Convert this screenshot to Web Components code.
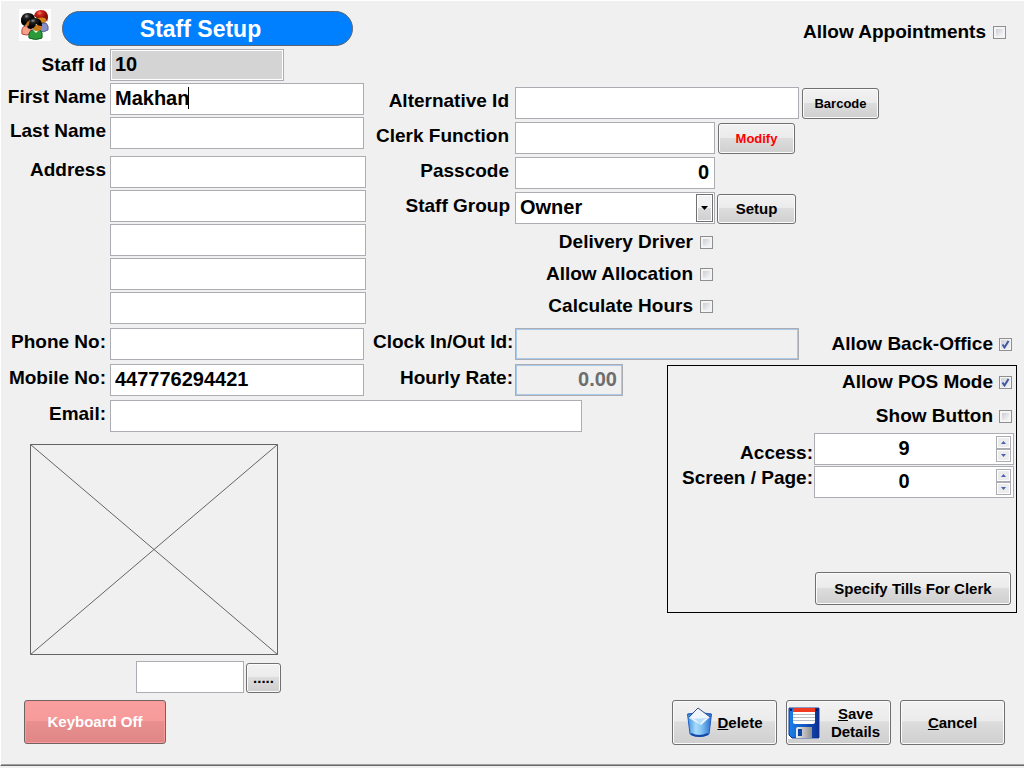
<!DOCTYPE html>
<html lang="en">
<head>
<meta charset="utf-8">
<title>Staff Setup</title>
<style>
html,body{margin:0;background:#f0f0f0}
body{font-family:"Liberation Sans",Arial,sans-serif;font-weight:bold;color:#000}
</style>
</head>
<body>
<staff-setup></staff-setup>
<script>
const attach=(el,html)=>{const r=el.attachShadow({mode:'open'});r.innerHTML=html;return r};

/* label + text box, with room for a trailing button */
class FieldRow extends HTMLElement{
  connectedCallback(){
    const kind=this.getAttribute('kind')||'';
    const label=this.getAttribute('label')||'';
    const pad=label.endsWith(':')?'tight':'';
    const r=attach(this,`<style>
:host{display:flex;align-items:center;min-width:0}
label{flex:none;box-sizing:border-box;width:var(--label-w,110px);padding:0 var(--label-pad,4px) var(--label-lift,4px) 0;text-align:right;font-size:19px;line-height:24px;white-space:nowrap}
label.tight{padding-right:var(--colon-pad,4px)}
.box{position:relative;flex:0 1 var(--field-w,100%);min-width:0;display:flex}
input{box-sizing:border-box;width:100%;height:32px;margin:0;padding:0 5px 2px 4px;border:1px solid #abadb3;border-radius:0;background:#fff;font:inherit;font-size:20px;color:#000;outline:0}
input.id{background:#d4d4d4;box-shadow:inset 0 0 0 1px #fff}
input.off{background:#f0f0f0;color:#6d6d6d;box-shadow:inset 0 0 0 1px #a9c9ea}
input.right{text-align:right}
.caret{position:absolute;left:78px;top:4px;width:1px;height:22px;background:#000}
::slotted(*){flex:none;align-self:flex-end;margin-left:3px}
</style>
<label for="f" class="${pad}">${label}</label>
<span class="box"><input id="f" type="text"></span><slot></slot>`);
    const i=r.querySelector('input');
    i.value=this.getAttribute('value')||'';
    if(kind)i.className=kind;
    if(this.hasAttribute('right'))i.classList.add('right');
    if(kind==='id')i.readOnly=true;
    if(kind==='off')i.disabled=true;
    if(!label){i.setAttribute('aria-label',this.getAttribute('name'));r.querySelector('label').remove();
      if(!this.hasAttribute('flush'))r.querySelector('.box').style.marginLeft='var(--label-w,110px)';}
    if(this.hasAttribute('caret'))r.querySelector('.box').insertAdjacentHTML('beforeend','<span class="caret"></span>');
  }
}
customElements.define('field-row',FieldRow);

class SelectRow extends HTMLElement{
  connectedCallback(){
    attach(this,`<style>
:host{display:flex;align-items:center}
label{flex:none;box-sizing:border-box;width:142px;padding:0 5px 4px 0;text-align:right;font-size:19px;line-height:24px}
.box{position:relative;flex:0 1 200px;display:flex}
select{appearance:none;box-sizing:border-box;width:100%;height:32px;padding:0 20px 2px 4px;border:1px solid #abadb3;border-radius:0;background:#fff;font:inherit;font-size:20px;color:#000}
.arrow{position:absolute;right:2px;top:2px;bottom:2px;width:17px;box-sizing:border-box;border:1px solid #707070;box-shadow:inset 0 0 0 1px #fff;background:linear-gradient(#f2f2f2 50%,#dcdcdc 50%,#cfcfcf);display:grid;place-items:center;pointer-events:none}
::slotted(*){flex:none;align-self:flex-end;margin-left:2px}
</style><label for="s">${this.getAttribute('label')}</label>
<span class="box"><select id="s"><option>${this.getAttribute('value')}</option></select>
<span class="arrow"><svg width="7" height="4"><path d="M0 0h7L3.5 4z"/></svg></span></span><slot></slot>`);
  }
}
customElements.define('select-row',SelectRow);

class CheckRow extends HTMLElement{
  connectedCallback(){
    const r=attach(this,`<style>
:host{display:flex;justify-content:flex-end;align-items:center;height:32px}
label{display:flex;align-items:center;gap:var(--gap,7px);font-size:19px;line-height:24px;white-space:nowrap}
input{appearance:none;flex:none;box-sizing:border-box;width:13px;height:13px;margin:0;border:1px solid #8e8f8f;
background:linear-gradient(135deg,#cbcfd5,#f6f6f6) 2px 2px/7px 7px no-repeat,#f4f4f4;box-shadow:inset 0 0 0 1px #f4f4f4}
input:checked{background:url("data:image/svg+xml,%3Csvg xmlns='http://www.w3.org/2000/svg' width='11' height='11'%3E%3Cpath d='M2.5 5.5L4.5 8.5L8.5 2' fill='none' stroke='%233f55a0' stroke-width='2'/%3E%3C/svg%3E"),linear-gradient(135deg,#cbcfd5,#f6f6f6)}
</style><label><span>${this.getAttribute('label')}</span><input type="checkbox"></label>`);
    r.querySelector('input').checked=this.hasAttribute('checked');
  }
}
customElements.define('check-row',CheckRow);

class PushButton extends HTMLElement{
  connectedCallback(){
    attach(this,`<style>
:host{display:block;width:var(--w,77px);height:var(--h,31px)}
button{box-sizing:border-box;width:100%;height:100%;margin:0;padding:0 3px;border:1px solid #707070;border-radius:3px;box-shadow:inset 0 0 0 1px #fbfbfb;
background:linear-gradient(#f2f2f2,#ebebeb 47%,#dddddd 48%,#cfcfcf);color:var(--ink,#000);font:inherit;font-size:var(--size,15px);line-height:18px;display:flex;align-items:center;justify-content:center;gap:4px}
:host([tone=red]) button{border-color:#6e6464;box-shadow:inset 0 0 0 1px #f99;background:linear-gradient(#f99f9f,#f69a9a 47%,#e98f90 48%,#df8686);color:#fff}
</style><button type="button"><slot></slot></button>`);
  }
}
customElements.define('push-button',PushButton);

class SpinPair extends HTMLElement{
  connectedCallback(){
    const spin=(id,v)=>`<span class="box"><input id="${id}" type="number" value="${v}"><span class="arrows">
<button type="button" aria-label="Increase"><svg width="5" height="3"><path d="M0 3h5L2.5 0z" fill="#4a62b0"/></svg></button>
<button type="button" aria-label="Decrease"><svg width="5" height="3"><path d="M0 0h5L2.5 3z" fill="#4a62b0"/></svg></button></span></span>`;
    attach(this,`<style>
:host{display:flex;justify-content:flex-end;align-items:center}
.labels{display:flex;flex-direction:column;text-align:right;font-size:19px;line-height:25px;padding:0 1px 2px 0;white-space:nowrap}
.boxes{display:flex;flex-direction:column;gap:1px;flex:0 1 200px}
.box{position:relative;display:flex}
input{appearance:textfield;box-sizing:border-box;width:100%;height:32px;margin:0;border:1px solid #abadb3;background:#fff;padding:0 20px 2px 0;text-align:center;font:inherit;font-size:20px;color:#000}
input::-webkit-inner-spin-button{appearance:none;margin:0}
.arrows{position:absolute;right:3px;top:3px;bottom:3px;width:15px;display:flex;flex-direction:column}
button{flex:1;min-height:0;padding:0;border:1px solid #abadb3;box-shadow:inset 0 0 0 1px #fff;background:#ececec;display:grid;place-items:center}
</style><span class="labels"><label for="a">Access:</label><label for="p">Screen / Page:</label></span>
<span class="boxes">${spin('a',9)}${spin('p',0)}</span>`);
  }
}
customElements.define('spin-pair',SpinPair);

class TitleBar extends HTMLElement{
  connectedCallback(){
    attach(this,`<style>
:host{display:flex;align-items:center;height:48px;padding:0 18px}
svg{flex:none;background:#fff}
h1{box-sizing:border-box;width:291px;height:35px;margin:7px 0 0 11px;padding-right:14px;border:1px solid #5a6470;border-radius:18px;background:#0080ff;color:#fff;font-size:23px;line-height:34px;text-align:center}
.end{margin-left:auto;padding-top:14px}
</style>
<svg width="32" height="32" viewBox="0 0 32 32">
<defs><radialGradient id="k" cx=".4" cy=".25"><stop offset="0" stop-color="#999"/><stop offset=".35" stop-color="#222"/><stop offset="1" stop-color="#000"/></radialGradient>
<radialGradient id="r" cx=".4" cy=".25"><stop offset="0" stop-color="#f08070"/><stop offset=".4" stop-color="#cf2418"/><stop offset="1" stop-color="#841008"/></radialGradient></defs>
<path d="M20 22q0-8 4-8h3q3 3 2 7-4 3-9 1z" fill="#8590c8" stroke="#444e80" stroke-width=".8"/>
<path d="M17 7h11q0 7-5 7t-6-7z" fill="#d78318" stroke="#6b3c08" stroke-width=".6"/>
<path d="M15 7Q16 1 22 1q7 0 7 8l-1 4q-1-3-2-4-3-1-8 0z" fill="url(#r)"/>
<path d="M3 25q-1-7 3-8h6v8q-5 2-9 0z" fill="#f5a18a" stroke="#b03a28" stroke-width=".9"/>
<path d="M6 12h10v5q-6 3-9-1z" fill="#b86a18"/>
<path d="M2 12Q2 4 9 4t7 7q-6 0-8 2l-2 4q-4-1-4-5z" fill="url(#k)"/>
<path d="M10 29q-1-6 3-8h8q3 2 2 8-6 3-13 0z" fill="#2a9b38" stroke="#126020"/><path d="M14 21l3 3 3-3z" fill="#ecffec"/>
<path d="M13 16h10q0 6-5 6t-5-6z" fill="#c87818"/>
<path d="M8 18l2-2q0-7 6-7 7 0 7 8-4 0-6-2-1 4-5 5-3 0-4-2z" fill="url(#k)"/></svg>
<h1>Staff Setup</h1><check-row class="end" label="Allow Appointments"></check-row>`);
  }
}
customElements.define('title-bar',TitleBar);

class StaffSetup extends HTMLElement{
  connectedCallback(){
    attach(this,`<style>
:host{display:flex;flex-direction:column;box-sizing:border-box;min-height:100vh;padding-bottom:2px}
main{flex:1;box-sizing:border-box;border-left:1px solid #fff;border-top:1px solid #fff;border-bottom:1px solid #696969;box-shadow:inset 0 -1px #a0a0a0}
.top,.clock{display:grid;grid-template-columns:372fr 651fr}
.clock{margin:4px 0}
.low{display:grid;grid-template-columns:666fr 357fr}
.pair{display:grid;grid-template-columns:372fr 294fr}
.left,.email,.pair,.clock{--label-w:109px;--label-pad:4px;--colon-pad:4px}
.left{display:flex;flex-direction:column;padding-right:7px}
.names{display:grid;gap:2px;padding-right:2px}
.names .id{--field-w:174px;--label-lift:0px}
.address{display:grid;gap:2px;margin-top:7px}
.short{padding-right:9px}
.mid{--label-w:142px;--label-pad:6px;--colon-pad:2px}
.top .mid{display:flex;flex-direction:column;gap:3px;padding-top:38px}
.w284{--field-w:284px}.w200{--field-w:200px}.w108{--field-w:108px}
.small{--size:13px}.modify{--ink:#f00}
.checks{width:340px;margin-top:-1px}
.office{display:flex;justify-content:space-between;padding-right:12px}
.office field-row{flex:1}
.office check-row,.panel check-row{--gap:6px}
.email{--field-w:472px;margin-top:4px}
.photo{display:block;width:248px;height:211px;margin:12px 0 6px 29px}
.file{display:flex;align-items:flex-end;gap:2px;padding-left:135px}
.file push-button{--w:35px;--h:30px}
.file field-row{width:108px}
.panel{box-sizing:border-box;display:flex;flex-direction:column;border:1px solid #000;margin:1px 7px 0 0;height:248px;padding:0 2px 7px}
.panel check-row{padding-right:2px}
.panel .show{margin:2px 0 1px}
.tills{--w:196px;--h:33px;margin:auto 3px 0 auto}
footer{display:flex;align-items:flex-end;gap:9px;padding:7px 19px 18px 23px}
footer push-button{--w:105px;--h:45px}
footer .kb{--w:142px;--h:44px;margin-right:auto;align-self:flex-start}
.center{text-align:center;flex:1}
.disk,.bin{flex:none}
.disk{margin-left:-2px}
</style>
<main>
<title-bar></title-bar>
<section class="top">
 <div class="left">
  <div class="names">
   <field-row class="id" label="Staff Id" value="10" kind="id"></field-row>
   <field-row label="First Name" value="Makhan" caret></field-row>
   <field-row label="Last Name"></field-row>
  </div>
  <div class="address">
   <field-row label="Address"></field-row>
   <field-row name="Address line 2"></field-row>
   <field-row name="Address line 3"></field-row>
   <field-row name="Address line 4"></field-row>
   <field-row name="Address line 5"></field-row>
  </div>
 </div>
 <div class="mid">
  <field-row class="w284" label="Alternative Id"><push-button class="small">Barcode</push-button></field-row>
  <field-row class="w200" label="Clerk Function"><push-button class="small modify">Modify</push-button></field-row>
  <field-row class="w200" label="Passcode" value="0" right></field-row>
  <select-row label="Staff Group" value="Owner"><push-button style="--w:79px;--h:30px">Setup</push-button></select-row>
  <div class="checks">
   <check-row label="Delivery Driver"></check-row>
   <check-row label="Allow Allocation"></check-row>
   <check-row label="Calculate Hours"></check-row>
  </div>
 </div>
</section>
<section class="clock">
 <field-row class="short" label="Phone No:"></field-row>
 <div class="mid office"><field-row class="w284" label="Clock In/Out Id:" kind="off"></field-row><check-row label="Allow Back-Office" checked></check-row></div>
</section>
<section class="low">
 <div>
  <div class="pair">
   <field-row class="short" label="Mobile No:" value="447776294421"></field-row>
   <field-row class="mid w108" label="Hourly Rate:" value="0.00" kind="off" right></field-row>
  </div>
  <field-row class="email" label="Email:"></field-row>
  <svg class="photo" viewBox="0 0 248 211" role="img" aria-label="No photo"><path d="M.5.5h247v210H.5zL247.500 210.500M247.500.5L.5 210.500" fill="none" stroke="#646464"/></svg>
  <div class="file"><field-row name="Photo file" flush></field-row><push-button>.....</push-button></div>
 </div>
 <div class="panel">
  <check-row label="Allow POS Mode" checked></check-row>
  <check-row class="show" label="Show Button"></check-row>
  <spin-pair></spin-pair>
  <push-button class="tills">Specify Tills For Clerk</push-button>
 </div>
</section>
<footer>
 <push-button class="kb" tone="red">Keyboard Off</push-button>
 <push-button>
  <svg class="bin" width="27" height="31" viewBox="0 0 27 31"><defs><linearGradient id="b"><stop offset="0" stop-color="#3f8fe0"/><stop offset=".35" stop-color="#a8dcfb"/><stop offset=".6" stop-color="#7fc0f4"/><stop offset="1" stop-color="#2a6ecb"/></linearGradient></defs>
  <path d="M1.500 7q12-3 24 0L23 27q-9 5-19 0z" fill="url(#b)" stroke="#1f5fc0"/><path d="M2 7q11 6 23 0" fill="none" stroke="#2c6cc8"/><path d="M3 11L12 1l12 9-9 8z" fill="#eef6ff"/><path d="M3 10L12 1l12 9" fill="none" stroke="#35507c"/><path d="M3 12q6-2 11 6 3-7 9-7" fill="#b9def9"/><path d="M5 27q8 4 17 0" fill="none" stroke="#1248a8" stroke-width="2"/></svg>
  <span><u>D</u>elete</span></push-button>
 <push-button>
  <svg class="disk" width="32" height="32" viewBox="0 0 32 32"><defs><linearGradient id="d"><stop offset="0" stop-color="#1a80ec"/><stop offset="1" stop-color="#0b2f94"/></linearGradient><linearGradient id="m"><stop offset="0" stop-color="#eee"/><stop offset="1" stop-color="#8f8f8f"/></linearGradient></defs>
  <path d="M0 0h32v32H0z" fill="#fff"/><path d="M1 1h30v30H4l-3-3z" fill="url(#d)" stroke="#10318a"/><path d="M5 1h22v4H5z" fill="#f03a22"/><path d="M5 5h22v10q0 2-2 2H7q-2 0-2-2z" fill="#fff"/><path d="M5 7.500h22M5 10.500h22M5 13.500h22" stroke="#b5bcc6"/><path d="M8 31V22q0-2 2-2h14v11z" fill="url(#m)"/><path d="M10 22h4v7h-4z" fill="#0b46a8"/><path d="M2 3h2M28 3h2" stroke="#071c58" stroke-width="2"/></svg>
  <span class="center"><u>S</u>ave<br>Details</span></push-button>
 <push-button><span><u>C</u>ancel</span></push-button>
</footer>
</main>`);
  }
}
customElements.define('staff-setup',StaffSetup);
</script>
</body>
</html>
